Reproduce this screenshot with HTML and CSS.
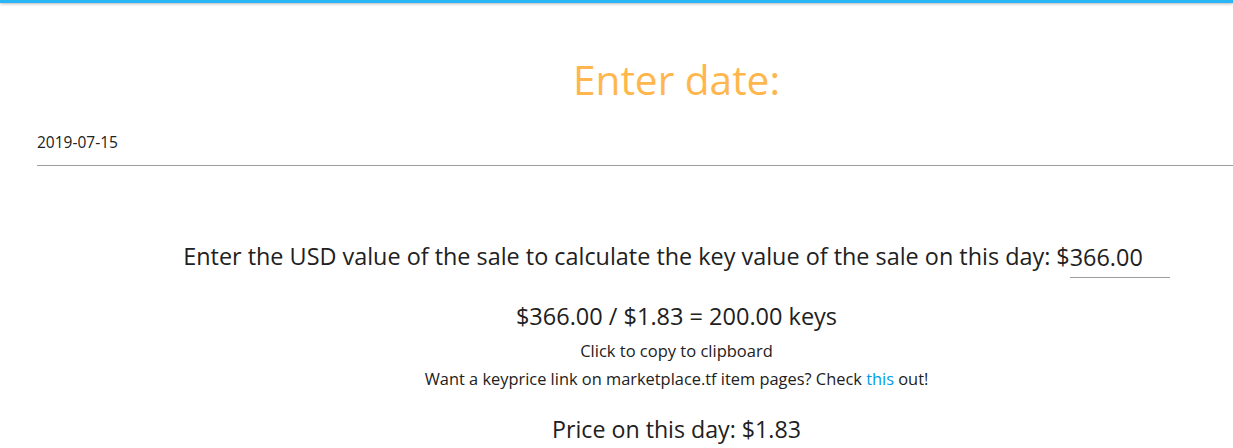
FILE: index.html
```html
<!DOCTYPE html>
<html>
<head>
<meta charset="utf-8">
<link rel="stylesheet" href="styles.css">
</head>
<body>
<div class="topbar"></div>
<div class="container">
  <h3 class="title">Enter date:</h3>
  <div class="date-field">
    <input class="date-input" type="text" value="2019-07-15">
  </div>
  <div class="calc">
    <div class="usd-line">
      <span>Enter the USD value of the sale to calculate the key value of the sale on this day: $</span><input class="usd-input" type="text" value="366.00">
    </div>
    <div class="result">$366.00 / $1.83 = 200.00 keys</div>
    <div class="copy">Click to copy to clipboard</div>
    <div class="hint">Want a keyprice link on marketplace.tf item pages? Check <a href="#" class="link">this</a> out!</div>
    <div class="price">Price on this day: $1.83</div>
  </div>
</div>
</body>
</html>
```

FILE: styles.css
```css
html, body {
  margin: 0;
  padding: 0;
  overflow: hidden;
  background: #ffffff;
}
body {
  font-family: "Open Sans", "Noto Sans", sans-serif;
  color: #212121;
}
.topbar {
  height: 3px;
  background: #29b6f6;
  box-shadow: 0 1px 3px rgba(0, 0, 0, 0.3);
}
.container {
  margin-left: 37px;
  width: 1279px;
}
.title {
  margin: 49px 0 0 0;
  font-size: 40.6px;
  font-weight: 400;
  line-height: 56px;
  color: #ffb74d;
  text-align: center;
}
.date-field {
  margin-top: 10px;
}
.date-input {
  display: block;
  width: 100%;
  box-sizing: border-box;
  height: 48px;
  border: none;
  border-bottom: 1px solid #9e9e9e;
  padding: 0;
  margin: 0;
  font-family: inherit;
  font-size: 15.5px;
  color: #212121;
  outline: none;
  background: transparent;
}
.calc {
  margin-top: 70px;
  text-align: center;
}
.usd-line {
  font-size: 23.4px;
  line-height: 40px;
}
.usd-input {
  width: 100px;
  border: none;
  border-bottom: 1px solid #9e9e9e;
  padding: 0;
  margin: 0;
  font-family: inherit;
  font-size: 23.4px;
  color: #212121;
  height: 41px;
  vertical-align: top;
  outline: none;
  background: transparent;
}
.result {
  margin-top: 23px;
  font-size: 23.5px;
  line-height: 30px;
}
.copy {
  font-size: 16.5px;
  line-height: 22px;
  margin-top: 9px;
}
.hint {
  font-size: 16.4px;
  line-height: 22px;
  margin-top: 6px;
}
.link {
  color: #039be5;
  text-decoration: none;
}
.price {
  margin-top: 24px;
  font-size: 23.2px;
  line-height: 30px;
}
```
